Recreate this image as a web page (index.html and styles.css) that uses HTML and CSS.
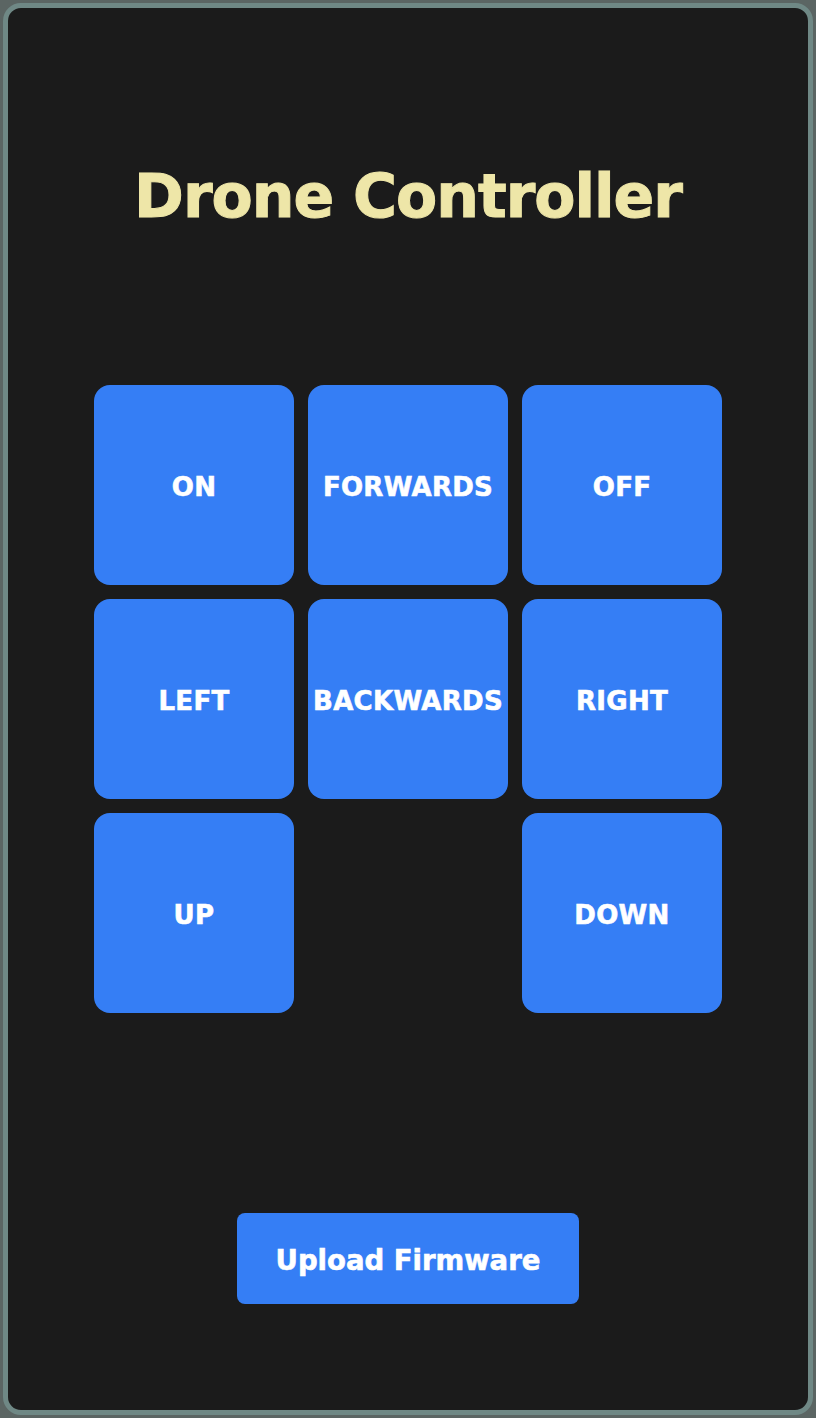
FILE: index.html
```html
<!DOCTYPE html>
<html>
<head>
<meta charset="utf-8">
<link rel="stylesheet" href="styles.css">
</head>
<body>
<div class="card">
  <h1 class="title">Drone Controller</h1>
  <div class="pad">
    <button class="key">ON</button>
    <button class="key">FORWARDS</button>
    <button class="key">OFF</button>
    <button class="key">LEFT</button>
    <button class="key">BACKWARDS</button>
    <button class="key">RIGHT</button>
    <button class="key">UP</button>
    <span class="blank"></span>
    <button class="key">DOWN</button>
  </div>
  <button class="upload">Upload Firmware</button>
</div>
</body>
</html>
```
FILE: styles.css
```css
html, body {
  margin: 0;
  padding: 0;
}
body {
  background: #5b6563;
  padding: 3px;
  height: 1418px;
  box-sizing: border-box;
  font-family: "DejaVu Sans", "Noto Sans", sans-serif;
}
.card {
  height: 100%;
  box-sizing: border-box;
  background: #1b1b1b;
  border: 5px solid #6f8885;
  border-radius: 18px;
  display: flex;
  flex-direction: column;
  align-items: center;
}
.title {
  margin: 148px 0 0;
  height: 80px;
  line-height: 80px;
  font-size: 60px;
  font-weight: 700;
  letter-spacing: -1px;
  color: #eee6a8;
  -webkit-text-stroke: 1px #eee6a8;
}
.pad {
  margin-top: 149px;
  display: grid;
  grid-template-columns: repeat(3, 200px);
  grid-auto-rows: 200px;
  gap: 14px;
}
.key {
  border: none;
  border-radius: 16px;
  background: #357ef5;
  color: #ffffff;
  font-family: inherit;
  font-size: 26px;
  font-weight: 700;
  letter-spacing: 0.3px;
  -webkit-text-stroke: 0.6px #ffffff;
  padding: 4px 0 0;
}
.upload {
  margin-top: 200px;
  width: 342px;
  height: 91px;
  border: none;
  border-radius: 8px;
  background: #357ef5;
  color: #ffffff;
  font-family: inherit;
  font-size: 27.5px;
  font-weight: 700;
  -webkit-text-stroke: 0.6px #ffffff;
  padding: 2px 0 0;
}
```
